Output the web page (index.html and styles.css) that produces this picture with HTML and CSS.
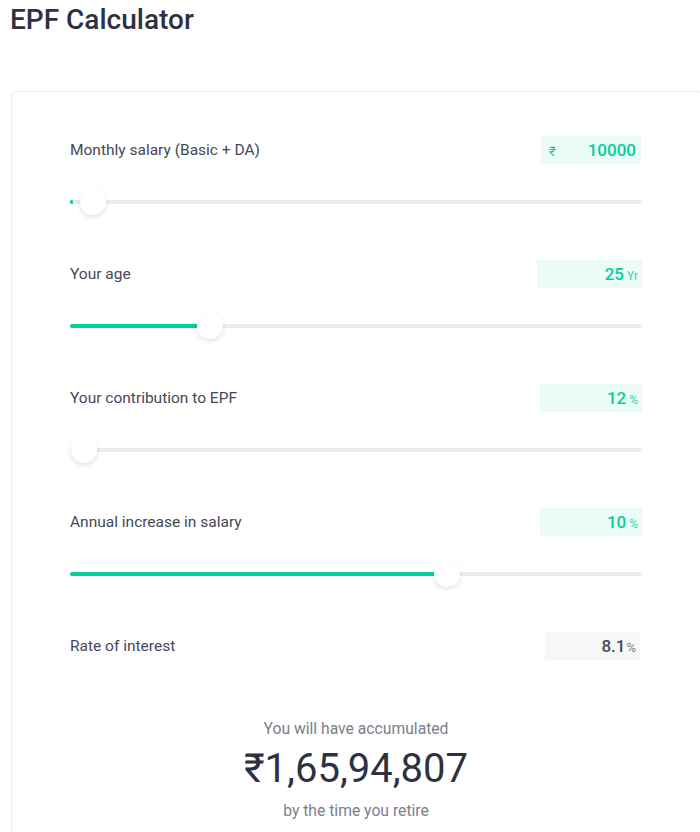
FILE: index.html
```html
<!DOCTYPE html>
<html>
<head>
<meta charset="utf-8">
<link rel="stylesheet" href="styles.css">
</head>
<body>
<h1 class="title">EPF Calculator</h1>
<div class="card">
  <div class="row">
    <div class="head">
      <span class="label">Monthly salary (Basic + DA)</span>
      <span class="value v1"><span class="pre">₹</span><span class="num">10000</span></span>
    </div>
    <div class="track"><div class="fill" style="width:3px"></div><div class="thumb" style="left:23px"></div></div>
  </div>
  <div class="row">
    <div class="head">
      <span class="label">Your age</span>
      <span class="value v2"><span class="num">25</span><span class="unit">Yr</span></span>
    </div>
    <div class="track"><div class="fill" style="width:140px"></div><div class="thumb" style="left:140px"></div></div>
  </div>
  <div class="row">
    <div class="head">
      <span class="label">Your contribution to EPF</span>
      <span class="value v3"><span class="num">12</span><span class="unit">%</span></span>
    </div>
    <div class="track"><div class="fill" style="width:0px"></div><div class="thumb" style="left:14px"></div></div>
  </div>
  <div class="row">
    <div class="head">
      <span class="label">Annual increase in salary</span>
      <span class="value v3"><span class="num">10</span><span class="unit">%</span></span>
    </div>
    <div class="track"><div class="fill" style="width:366px"></div><div class="thumb" style="left:377px"></div></div>
  </div>
  <div class="row last">
    <div class="head">
      <span class="label">Rate of interest</span>
      <span class="value gray"><span class="num">8.1</span><span class="unit">%</span></span>
    </div>
  </div>
  <div class="result">
    <div class="sub">You will have accumulated</div>
    <div class="amount">₹1,65,94,807</div>
    <div class="sub">by the time you retire</div>
  </div>
</div>
</body>
</html>
```
FILE: styles.css
```css
html, body {
  margin: 0;
  padding: 0;
  background: #fff;
  font-family: Roboto, "Liberation Sans", sans-serif;
  overflow: hidden;
}
.title {
  margin: 0;
  padding: 3px 0 0 10px;
  font-size: 28px;
  font-weight: 500;
  color: #2e3142;
  line-height: 34px;
}
.card {
  margin: 54px 0 0 11px;
  width: 572px;
  padding: 44px 59px 40px 58px;
  border: 1px solid #ebebeb;
  border-radius: 5px;
}
.row {
  height: 124px;
}
.row.last {
  height: 87px;
}
.head {
  display: flex;
  justify-content: space-between;
  align-items: center;
  height: 28px;
}
.label {
  font-size: 15.5px;
  color: #44475b;
}
.value {
  display: flex;
  align-items: baseline;
  justify-content: flex-end;
  height: 28px;
  line-height: 28px;
  background: #ebfbf5;
  padding: 0 4px;
  box-sizing: border-box;
  color: #00d09c;
  font-weight: 500;
  font-size: 17px;
}
.v1 {
  width: 100px;
  justify-content: space-between;
  padding: 0 5px 0 8px;
  margin-right: 1px;
}
.v1 .pre { font-size: 13px; font-weight: 400; }
.v2 { width: 105px; }
.v3 { width: 102px; }
.unit {
  font-size: 12px;
  font-weight: 400;
  margin-left: 3px;
  opacity: 0.8;
}
.gray {
  width: 95px;
  background: #f7f7f7;
  color: #44475b;
  margin-right: 2px;
}
.gray .unit { opacity: 1; color: #7c7e8c; margin-left: 1px; font-size: 13px; }
.track {
  position: relative;
  margin-top: 36px;
  height: 4px;
  background: #ececec;
  border-radius: 2px;
}
.fill {
  height: 4px;
  background: #00d09c;
  border-radius: 2px;
}
.thumb {
  position: absolute;
  top: -11px;
  width: 26px;
  height: 26px;
  margin-left: -13px;
  border-radius: 50%;
  background: #fff;
  box-shadow: 0 2px 5px rgba(0,0,0,0.12);
}
.result {
  text-align: center;
}
.sub {
  font-size: 15.7px;
  color: #7c7e8c;
  line-height: 20px;
}
.amount {
  font-size: 40px;
  color: #2e3142;
  font-weight: 400;
  line-height: 50px;
  margin: 5px 0 7px;
}
```
